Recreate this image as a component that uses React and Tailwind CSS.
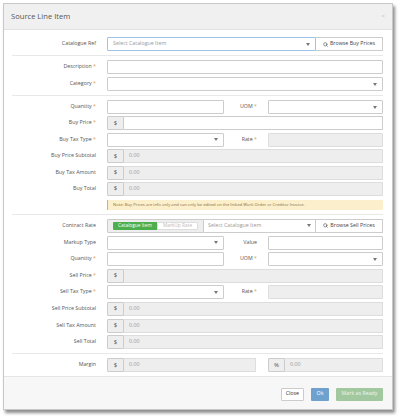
import { Search } from 'lucide-react'

function Caret() {
  return (
    <svg width="4" height="3" viewBox="0 0 4 3" className="shrink-0">
      <path d="M0 0h4L2 3z" fill="#777" />
    </svg>
  )
}

function Label({ children, req }) {
  return (
    <div className="w-[84px] shrink-0 text-right text-[5.3px] text-[#555]">
      {children}
      {req && <span className="text-[#e0a040]"> *</span>}
    </div>
  )
}

function Input({ className = '', disabled, children }) {
  return (
    <div
      className={`h-full flex items-center px-[5px] border rounded-[1px] text-[5.3px] ${
        disabled ? 'bg-[#eeeeee] border-[#dddddd]' : 'bg-white border-[#cccccc]'
      } ${className}`}
    >
      {children}
    </div>
  )
}

function Select({ className = '', placeholder }) {
  return (
    <div className={`h-full flex items-center justify-between px-[5px] bg-white border border-[#cccccc] rounded-[1px] text-[5.3px] text-[#999] ${className}`}>
      <span>{placeholder}</span>
      <Caret />
    </div>
  )
}

function Money({ value, symbol = '$', className = '', disabled = true }) {
  return (
    <div className={`h-full flex ${className}`}>
      <div className="w-[17px] shrink-0 flex items-center justify-center bg-[#eeeeee] border border-[#cccccc] rounded-l-[1px] text-[6px] text-[#555]">
        {symbol}
      </div>
      <div
        className={`flex-1 flex items-center px-[5px] border border-l-0 rounded-r-[1px] text-[5.3px] text-[#999] ${
          disabled ? 'bg-[#eeeeee] border-[#dddddd]' : 'bg-white border-[#cccccc]'
        }`}
      >
        {value}
      </div>
    </div>
  )
}

function Row({ label, req, children }) {
  return (
    <div className="flex items-center h-[14px]">
      <Label req={req}>{label}</Label>
      <div className="ml-[11px] flex-1 h-full flex">{children}</div>
    </div>
  )
}

function Split({ left, midLabel, req, right }) {
  return (
    <>
      <div className="w-[117px] h-full">{left}</div>
      <div className="w-[44px] pr-[11px] flex items-center justify-end text-[5.3px] text-[#555]">
        {midLabel}
        {req && <span className="text-[#e0a040]">&nbsp;*</span>}
      </div>
      <div className="flex-1 h-full">{right}</div>
    </>
  )
}

function Browse({ children }) {
  return (
    <div className="w-[67px] shrink-0 h-full flex items-center justify-center gap-[2px] bg-white border border-l-0 border-[#cccccc] rounded-r-[1px] text-[5.3px] text-[#444]">
      <Search size={5} strokeWidth={3} className="text-[#555]" />
      {children}
    </div>
  )
}

function Divider() {
  return <div className="h-px bg-[#e8e8e8] my-[4px]" />
}

export default function App() {
  return (
    <div className="w-[402px] h-[420px] bg-white pl-[3px] pt-[3px]" style={{ fontFamily: '"Open Sans", sans-serif' }}>
      <div className="w-[390px] h-[407px] flex flex-col border border-[#c8c8c8] bg-white shadow-[2px_3px_3px_rgba(0,0,0,0.45)]">
        {/* header */}
        <div className="h-[26px] shrink-0 flex items-center justify-between pl-[7px] pr-[7px] bg-[#f0f0f0] border-b border-[#e2e2e2]">
          <span className="text-[7.6px] text-[#555]">Source Line Item</span>
          <span className="text-[6px] text-[#c8c8c8]">×</span>
        </div>

        {/* body */}
        <div className="flex-1 pl-[8px] pr-[9px] pt-[7px]">
          <Row label="Catalogue Ref">
            <div className="flex-1 h-full flex items-center justify-between px-[5px] bg-white border border-[#9dc3e6] rounded-l-[1px] text-[5.3px] text-[#999]">
              <span>Select Catalogue Item</span>
              <Caret />
            </div>
            <Browse>Browse Buy Prices</Browse>
          </Row>

          <Divider />

          <div className="flex flex-col gap-[3px]">
            <Row label="Description" req>
              <Input className="flex-1" />
            </Row>
            <Row label="Category" req>
              <Select className="flex-1" />
            </Row>
          </div>

          <Divider />

          <div className="flex flex-col gap-[2.4px]">
            <Row label="Quantity" req>
              <Split left={<Input />} midLabel="UOM" req right={<Select />} />
            </Row>
            <Row label="Buy Price" req>
              <Money className="flex-1" disabled={false} />
            </Row>
            <Row label="Buy Tax Type" req>
              <Split left={<Select />} midLabel="Rate" req right={<Input disabled />} />
            </Row>
            <Row label="Buy Price Subtotal">
              <Money className="flex-1" value="0.00" />
            </Row>
            <Row label="Buy Tax Amount">
              <Money className="flex-1" value="0.00" />
            </Row>
            <Row label="Buy Total">
              <Money className="flex-1" value="0.00" />
            </Row>
          </div>

          <div className="mt-[4px] ml-[95px] h-[10px] flex items-center pl-[5px] bg-[#fcefcc] border-l border-[#d8b060] text-[4.2px] text-[#8a6d3b] whitespace-nowrap">
            Note: Buy Prices are info only and can only be edited on the linked Work Order or Creditor Invoice.
          </div>

          <Divider />

          <div className="flex flex-col gap-[2.6px]">
            <Row label="Contract Rate">
              <div className="w-[97px] shrink-0 h-full flex items-center pl-[5px] pr-[5px] bg-[#eeeeee] border border-[#cccccc] rounded-l-[1px]">
                <div className="w-[44px] h-[8.5px] flex items-center justify-center bg-[#4cae4c] text-white text-[4.8px] rounded-l-[1px]">
                  Catalogue Item
                </div>
                <div className="flex-1 h-[8.5px] flex items-center justify-center bg-white border border-[#dddddd] text-[#bbbbbb] text-[4.8px] rounded-r-[1px]">
                  MarkUp Rate
                </div>
              </div>
              <div className="flex-1 h-full flex items-center justify-between px-[4px] bg-white border border-l-0 border-[#cccccc] text-[5.3px] text-[#999]">
                <span>Select Catalogue Item</span>
                <Caret />
              </div>
              <Browse>Browse Sell Prices</Browse>
            </Row>
            <Row label="Markup Type">
              <Split left={<Select />} midLabel="Value" right={<Input />} />
            </Row>
            <Row label="Quantity" req>
              <Split left={<Input />} midLabel="UOM" req right={<Select />} />
            </Row>
            <Row label="Sell Price" req>
              <Money className="flex-1" />
            </Row>
            <Row label="Sell Tax Type" req>
              <Split left={<Select />} midLabel="Rate" req right={<Input disabled />} />
            </Row>
            <Row label="Sell Price Subtotal">
              <Money className="flex-1" value="0.00" />
            </Row>
            <Row label="Sell Tax Amount">
              <Money className="flex-1" value="0.00" />
            </Row>
            <Row label="Sell Total">
              <Money className="flex-1" value="0.00" />
            </Row>
          </div>

          <Divider />

          <Row label="Margin">
            <Money className="w-[149px]" value="0.00" />
            <div className="w-[12px]" />
            <Money className="flex-1" symbol="%" value="0.00" />
          </Row>
        </div>

        {/* footer */}
        <div className="h-[33px] shrink-0 flex items-center justify-end gap-[7px] pr-[9px] pt-[2px] bg-[#f7f7f7] border-t border-[#e5e5e5]">
          <div className="h-[13px] px-[4px] flex items-center bg-white border border-[#cccccc] rounded-[1px] text-[5.3px] text-[#333]">
            Close
          </div>
          <div className="h-[13px] w-[18px] flex items-center justify-center bg-[#6fa1cf] rounded-[1px] text-[5.3px] text-white">
            Ok
          </div>
          <div className="h-[13px] w-[47px] flex items-center justify-center bg-[#a2c8a0] rounded-[1px] text-[5.3px] text-[#eef5ee]">
            Mark as Ready
          </div>
        </div>
      </div>
    </div>
  )
}
